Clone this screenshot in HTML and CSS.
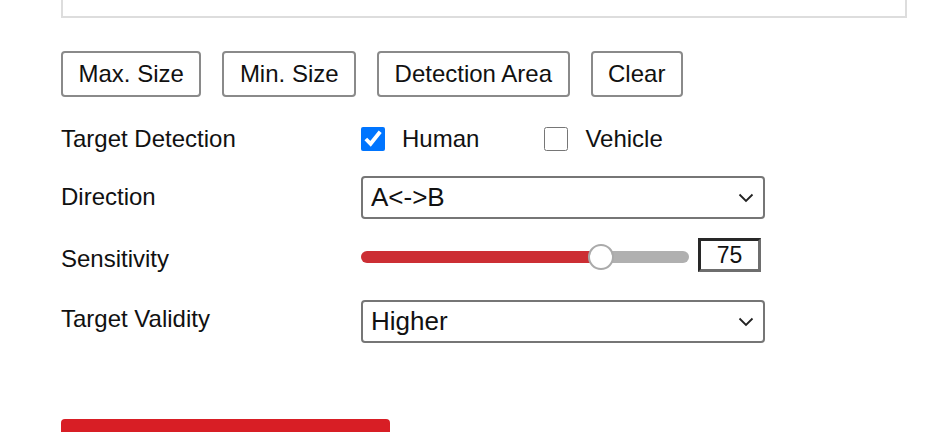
FILE: index.html
```html
<!DOCTYPE html>
<html>

<head>
    <title>Line Crossing Detection</title>
    <link rel="stylesheet" href="styles.css">
</head>

<body>
    <main class="page">
        <div class="preview"></div>

        <div class="tools">
            <button type="button" class="tool">Max. Size</button>
            <button type="button" class="tool">Min. Size</button>
            <button type="button" class="tool">Detection Area</button>
            <button type="button" class="tool">Clear</button>
        </div>

        <form class="settings">
            <div class="row row-target">
                <span class="label">Target Detection</span>
                <div class="checks">
                    <label class="check"><input type="checkbox" checked /> Human</label>
                    <label class="check"><input type="checkbox" /> Vehicle</label>
                </div>
            </div>

            <div class="row row-direction">
                <span class="label">Direction</span>
                <div class="select">
                    <select>
                        <option>A&lt;-&gt;B</option>
                        <option>A-&gt;B</option>
                        <option>B-&gt;A</option>
                    </select>
                    <svg class="chevron" width="16" height="10" viewBox="0 0 16 10"><path d="M1.5 1.5 L8 8 L14.5 1.5" fill="none" stroke="#222" stroke-width="1.8"/></svg>
                </div>
            </div>

            <div class="row row-sensitivity">
                <span class="label">Sensitivity</span>
                <div class="slider">
                    <input type="range" class="range" min="0" max="100" value="75" />
                    <input type="text" class="value" value="75" />
                </div>
            </div>

            <div class="row row-validity">
                <span class="label">Target Validity</span>
                <div class="select">
                    <select>
                        <option>Higher</option>
                        <option>High</option>
                        <option>Medium</option>
                        <option>Low</option>
                    </select>
                    <svg class="chevron" width="16" height="10" viewBox="0 0 16 10"><path d="M1.5 1.5 L8 8 L14.5 1.5" fill="none" stroke="#222" stroke-width="1.8"/></svg>
                </div>
            </div>

            <button type="button" class="save"></button>
        </form>
    </main>
</body>

</html>
```

FILE: styles.css
```css
* {
    margin: 0;
    box-sizing: border-box;
}

body {
    font-family: "Liberation Sans", Arial, sans-serif;
    color: #111;
    background-color: white;
    overflow: hidden;
}

.page {
    padding: 0 33px 0 61px;
}

.preview {
    height: 18px;
    border: 2px solid rgb(221, 221, 221);
    border-top: none;
}

.tools {
    display: flex;
    gap: 21px;
    margin-top: 33px;
}

.tool {
    height: 46px;
    padding: 0 15.5px;
    font-family: inherit;
    font-size: 24px;
    color: #111;
    background-color: white;
    border: 2px solid rgb(138, 138, 138);
    border-radius: 4px;
}

.settings {
    display: flex;
    flex-direction: column;
}

.row {
    display: flex;
    align-items: center;
}

.row-target {
    height: 44px;
    margin-top: 20px;
}

.row-direction {
    height: 42px;
    margin-top: 15px;
}

.row-sensitivity {
    height: 40px;
    margin-top: 17px;
}

.row-sensitivity .label {
    padding-top: 7px;
}

.row-validity {
    height: 42px;
    margin-top: 25px;
}

.row-validity .label {
    padding-bottom: 4px;
}

.label {
    width: 300px;
    font-size: 24px;
}

.checks {
    display: flex;
    gap: 65px;
}

.check {
    display: flex;
    align-items: center;
    gap: 17px;
    font-size: 24px;
}

.check input {
    width: 24px;
    height: 24px;
    margin: 0;
}

.select {
    position: relative;
    width: 404px;
}

.select select {
    appearance: none;
    width: 100%;
    height: 43px;
    padding: 0 40px 0 8px;
    font-family: inherit;
    font-size: 26px;
    color: #111;
    background-color: white;
    border: 2px solid rgb(118, 118, 118);
    border-radius: 4px;
}

.chevron {
    position: absolute;
    right: 11px;
    top: 17px;
    pointer-events: none;
}

.slider {
    display: flex;
    align-items: center;
    gap: 9px;
}

.range {
    appearance: none;
    width: 328px;
    height: 26px;
    margin: 4px 0 0;
    background: transparent;
}

.range::-webkit-slider-runnable-track {
    height: 12px;
    border-radius: 6px;
    background: linear-gradient(to right, rgb(204, 46, 52) 0 72%, rgb(176, 176, 176) 72%);
}

.range::-webkit-slider-thumb {
    appearance: none;
    width: 26px;
    height: 26px;
    margin-top: -7px;
    border-radius: 50%;
    background-color: white;
    border: 2px solid rgb(170, 170, 170);
}

.value {
    width: 63px;
    height: 34px;
    padding: 0;
    text-align: center;
    font-family: inherit;
    font-size: 23px;
    color: #111;
    border: 3px solid rgb(40, 40, 40);
    border-right-color: rgb(110, 110, 110);
    border-bottom-color: rgb(110, 110, 110);
}

.save {
    width: 329px;
    height: 40px;
    margin-top: 77px;
    background-color: rgb(216, 30, 37);
    border: none;
    border-radius: 4px;
}
```
